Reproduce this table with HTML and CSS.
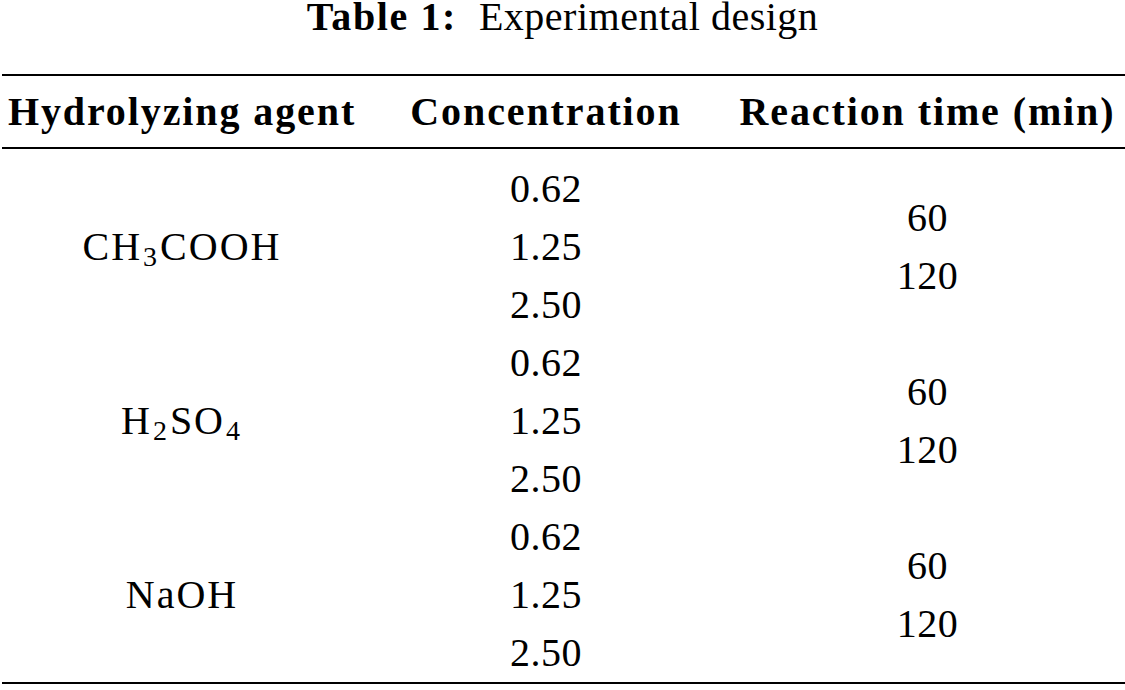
FILE: index.html
```html
<!DOCTYPE html>
<html lang="en">
<head>
<meta charset="utf-8">
<title>Table 1: Experimental design</title>
<link rel="stylesheet" href="styles.css">
</head>
<body>
<div class="page">
  <p class="caption"><span class="cap-label">Table 1:</span><span class="cap-text">Experimental design</span></p>
  <table class="design">
    <colgroup>
      <col class="c1">
      <col class="c2">
      <col class="c3">
    </colgroup>
    <thead>
      <tr>
        <th>Hydrolyzing agent</th>
        <th>Concentration</th>
        <th>Reaction time (min)</th>
      </tr>
    </thead>
    <tbody class="group first">
      <tr>
        <td rowspan="3" class="agent">CH<sub>3</sub>COOH</td>
        <td>0.62</td>
        <td rowspan="3" class="time"><span class="tl">60</span><span class="tl">120</span></td>
      </tr>
      <tr><td>1.25</td></tr>
      <tr><td>2.50</td></tr>
    </tbody>
    <tbody class="group">
      <tr>
        <td rowspan="3" class="agent">H<sub>2</sub>SO<sub>4</sub></td>
        <td>0.62</td>
        <td rowspan="3" class="time"><span class="tl">60</span><span class="tl">120</span></td>
      </tr>
      <tr><td>1.25</td></tr>
      <tr><td>2.50</td></tr>
    </tbody>
    <tbody class="group last">
      <tr>
        <td rowspan="3" class="agent">NaOH</td>
        <td>0.62</td>
        <td rowspan="3" class="time"><span class="tl">60</span><span class="tl">120</span></td>
      </tr>
      <tr><td>1.25</td></tr>
      <tr><td>2.50</td></tr>
    </tbody>
  </table>
</div>
</body>
</html>
```

FILE: styles.css
```css
html, body {
  margin: 0;
  padding: 0;
  background: #ffffff;
}

body {
  font-family: "Liberation Serif", "Times New Roman", serif;
  font-size: 40px;
  color: #000000;
}

.page {
  width: 1125px;
  height: 690px;
  overflow: hidden;
}

.caption {
  margin: 0 0 40px 0;
  height: 34px;
  line-height: 34px;
  text-align: center;
  letter-spacing: 0.5px;
}

.cap-label {
  font-weight: bold;
  letter-spacing: 1.6px;
  margin-right: 22px;
}

.design {
  margin-left: 2px;
  width: 1123px;
  border-collapse: collapse;
  border-top: 2.5px solid #000;
  border-bottom: 2.5px solid #000;
  table-layout: fixed;
}

.c1 { width: 360px; }
.c2 { width: 368px; }
.c3 { width: 395px; }

.design th {
  font-weight: bold;
  letter-spacing: 1.9px;
  line-height: 58px;
  padding: 7px 0 6px 0;
  text-align: center;
  border-bottom: 2px solid #000;
  white-space: nowrap;
}

.design td {
  padding: 0;
  height: 58px;
  line-height: 58px;
  text-align: center;
  vertical-align: middle;
  letter-spacing: 0.5px;
  white-space: nowrap;
}

.group.first tr:first-child td {
  padding-top: 11px;
}

.design td.agent {
  letter-spacing: 2px;
}

.design sub {
  font-size: 0.7em;
  line-height: 0;
  vertical-align: -0.22em;
  letter-spacing: 0;
  margin: 0 3px 0 1px;
}

.time .tl {
  display: block;
  line-height: 58px;
}
```
